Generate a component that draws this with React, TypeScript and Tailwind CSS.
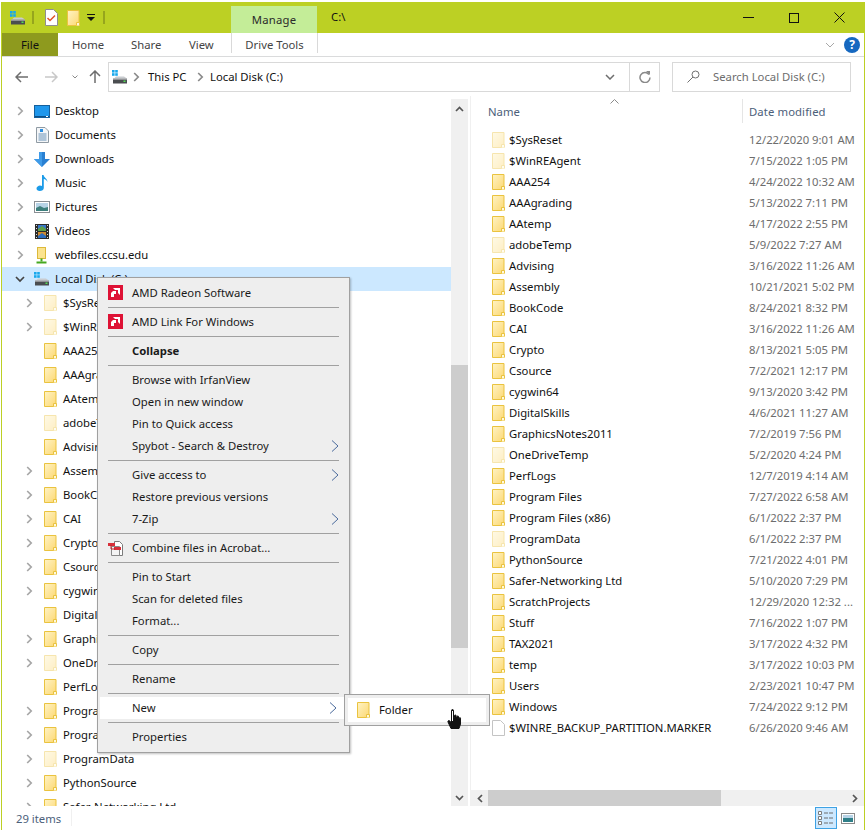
import React from "react";

const Folder = ({ faded = false, className = "" }: { faded?: boolean; className?: string }) => (
  <svg width="13" height="16" viewBox="0 0 13 16" className={`shrink-0 ${className}`} style={{ opacity: faded ? 0.42 : 1 }}>
    <defs>
      <linearGradient id="fg" x1="0" y1="0" x2="1" y2="1">
        <stop offset="0" stopColor="#fff3c4" />
        <stop offset="1" stopColor="#fcd873" />
      </linearGradient>
    </defs>
    <path d="M.5.5h11.5v15H.5z" fill="url(#fg)" stroke="#eac33f" />
    <path d="M9.5 15.5v-3h3v3" fill="#fff8dc" stroke="#eac33f" />
  </svg>
);

const Drive = ({ className = "" }: { className?: string }) => (
  <svg width="16" height="14" viewBox="0 0 16 14" className={`shrink-0 ${className}`}>
    <rect x="0" y="0" width="2.6" height="2.6" fill="#18a8ec" />
    <rect x="3.2" y="0" width="2.6" height="2.6" fill="#18a8ec" />
    <rect x="0" y="3.2" width="2.6" height="2.6" fill="#18a8ec" />
    <rect x="3.2" y="3.2" width="2.6" height="2.6" fill="#18a8ec" />
    <path d="M2 8.5 4 6.5h8l3 2z" fill="#c9ccd0" />
    <rect x="1" y="8.5" width="14" height="5" fill="#4a4d50" />
    <rect x="1" y="8.5" width="14" height="1" fill="#d8dadc" />
    <rect x="11.5" y="10.5" width="2" height="1.5" fill="#52e052" />
  </svg>
);

const Chev = ({ className = "", color = "#a6a6a6" }: { className?: string; color?: string }) => (
  <svg width="7" height="10" viewBox="0 0 7 10" className={`shrink-0 ${className}`}>
    <path d="M1.2 1 5.2 5 1.2 9" fill="none" stroke={color} strokeWidth="1.7" />
  </svg>
);

const Desktop = () => (
  <svg width="16" height="13" viewBox="0 0 16 13" className="shrink-0">
    <rect x=".5" y=".5" width="15" height="12" fill="#1f97ec" stroke="#15609c" />
    <rect x="1" y="11" width="14" height="1" fill="#0c4f86" />
    <rect x="12" y="11" width="2" height="1" fill="#fff" />
  </svg>
);
const Documents = () => (
  <svg width="13" height="16" viewBox="0 0 13 16" className="shrink-0">
    <path d="M.5.5h8.5l3.5 3.5v11.5H.5z" fill="#f4f6f8" stroke="#8f9aa3" />
    <path d="M4 2h3v3H4z" fill="#2d8fe0" />
    <path d="M2.5 7h8M2.5 9h8M2.5 11h8M2.5 13h8" stroke="#6a93b8" />
  </svg>
);
const Downloads = () => (
  <svg width="16" height="15" viewBox="0 0 16 15" className="shrink-0">
    <path d="M5 0h6v7h5l-8 8-8-8h5z" fill="#2a80d2" />
    <path d="M5 0h3v15l-8-8h5z" fill="#3f9be8" />
  </svg>
);
const Music = () => (
  <svg width="13" height="16" viewBox="0 0 13 16" className="shrink-0">
    <path d="M6 0h1.6c.3 2.600 4 3.500 3.800 7-.6-1.600-2-2.600-3.600-2.900V13c0 2-2 3-4 3S.5 15 .5 13.500 2.500 10.600 4 10.600c.8 0 1.500.2 2 .5z" fill="#1c9be8" />
  </svg>
);
const Pictures = () => (
  <svg width="16" height="12" viewBox="0 0 16 12" className="shrink-0">
    <rect x=".5" y=".5" width="15" height="11" fill="#fff" stroke="#8a8f94" />
    <rect x="2" y="2" width="12" height="8" fill="#b7d3e6" />
    <path d="M2 7 6 5l4 2 4-1v4H2z" fill="#3d7f7c" />
  </svg>
);
const Videos = () => (
  <svg width="14" height="15" viewBox="0 0 14 15" className="shrink-0">
    <rect width="14" height="15" fill="#2c2c2c" />
    <rect x="3" y="1" width="8" height="6" fill="#3a78c8" />
    <rect x="3" y="8" width="8" height="6" fill="#d08a30" />
    <path d="M3 5l4-3 4 3v2H3z" fill="#5ea04a" />
    <path d="M3 12l4-3 4 3v2H3z" fill="#2f6fc0" />
    <path d="M1 1h1v1H1zM1 4h1v1H1zM1 7h1v1H1zM1 10h1v1H1zM1 13h1v1H1zM12 1h1v1h-1zM12 4h1v1h-1zM12 7h1v1h-1zM12 10h1v1h-1zM12 13h1v1h-1z" fill="#ddd" />
  </svg>
);
const NetFolder = () => (
  <svg width="16" height="17" viewBox="0 0 16 17" className="shrink-0">
    <rect x="3.500" y=".5" width="8" height="11" fill="#fbe38e" stroke="#dcb93a" />
    <path d="M7.500 11.500v3" stroke="#45a820" strokeWidth="2" />
    <path d="M2.500 15.500h10" stroke="#45a820" strokeWidth="2" />
  </svg>
);
const Amd = () => (
  <span className="w-[15px] h-[15px] bg-[#de1235] flex items-center justify-center shrink-0">
    <svg width="9" height="9" viewBox="0 0 9 9">
      <path d="M2 0h7v7L7 5V2H4z" fill="#fff" />
      <path d="M0 5l2-2h3v3H3v3H0z" fill="#fff" />
    </svg>
  </span>
);
const Acrobat = () => (
  <svg width="18" height="17" viewBox="0 0 18 17" className="shrink-0">
    <path d="M6.500 1.500h5l3 3v11h-8z" fill="#fff" stroke="#7c7c7c" />
    <path d="M3.500 6.500h8v9h-8z" fill="#f4f4f4" stroke="#8a8a8a" />
    <rect x="0" y="3" width="7" height="3" fill="#d8303a" />
    <rect x="6" y="7" width="7" height="3" fill="#d8303a" />
    <path d="M3 5v4h4" stroke="#c02028" fill="none" />
  </svg>
);

type TreeRow = { n: string; c?: boolean; f?: boolean };
const kids: TreeRow[] = [
  { n: "$SysReset", c: true, f: true },
  { n: "$WinREAgent", c: true, f: true },
  { n: "AAA254" },
  { n: "AAAgrading" },
  { n: "AAtemp" },
  { n: "adobeTemp", f: true },
  { n: "Advising" },
  { n: "Assembly", c: true },
  { n: "BookCode", c: true },
  { n: "CAI", c: true },
  { n: "Crypto", c: true },
  { n: "Csource", c: true },
  { n: "cygwin64", c: true },
  { n: "DigitalSkills" },
  { n: "GraphicsNotes2011", c: true },
  { n: "OneDriveTemp", c: true, f: true },
  { n: "PerfLogs" },
  { n: "Program Files", c: true },
  { n: "Program Files (x86)", c: true },
  { n: "ProgramData", c: true, f: true },
  { n: "PythonSource", c: true },
  { n: "Safer-Networking Ltd", c: true },
];

const top: [string, React.ReactNode][] = [
  ["Desktop", <Desktop />],
  ["Documents", <Documents />],
  ["Downloads", <Downloads />],
  ["Music", <Music />],
  ["Pictures", <Pictures />],
  ["Videos", <Videos />],
  ["webfiles.ccsu.edu", <NetFolder />],
];

const files: [string, string, boolean?][] = [
  ["$SysReset", "12/22/2020 9:01 AM", true],
  ["$WinREAgent", "7/15/2022 1:05 PM", true],
  ["AAA254", "4/24/2022 10:32 AM"],
  ["AAAgrading", "5/13/2022 7:11 PM"],
  ["AAtemp", "4/17/2022 2:55 PM"],
  ["adobeTemp", "5/9/2022 7:27 AM", true],
  ["Advising", "3/16/2022 11:26 AM"],
  ["Assembly", "10/21/2021 5:02 PM"],
  ["BookCode", "8/24/2021 8:32 PM"],
  ["CAI", "3/16/2022 11:26 AM"],
  ["Crypto", "8/13/2021 5:05 PM"],
  ["Csource", "7/2/2021 12:17 PM"],
  ["cygwin64", "9/13/2020 3:42 PM"],
  ["DigitalSkills", "4/6/2021 11:27 AM"],
  ["GraphicsNotes2011", "7/2/2019 7:56 PM"],
  ["OneDriveTemp", "5/2/2020 4:24 PM", true],
  ["PerfLogs", "12/7/2019 4:14 AM"],
  ["Program Files", "7/27/2022 6:58 AM"],
  ["Program Files (x86)", "6/1/2022 2:37 PM"],
  ["ProgramData", "6/1/2022 2:37 PM", true],
  ["PythonSource", "7/21/2022 4:01 PM"],
  ["Safer-Networking Ltd", "5/10/2020 7:29 PM"],
  ["ScratchProjects", "12/29/2020 12:32 ..."],
  ["Stuff", "7/16/2022 1:07 PM"],
  ["TAX2021", "3/17/2022 4:32 PM"],
  ["temp", "3/17/2022 10:03 PM"],
  ["Users", "2/23/2021 10:47 PM"],
  ["Windows", "7/24/2022 9:12 PM"],
];

const Sep = () => <div className="h-px bg-[#a0a0a0] mx-[10px] my-[3px]" />;
const MenuArrow = () => (
  <svg width="8" height="12" viewBox="0 0 8 12" className="absolute right-[10px] top-[5px]">
    <path d="M1 .5 7 6l-6 5.500" fill="none" stroke="#4a6a9c" />
  </svg>
);
const Item = ({ t, icon, bold, arrow, hi }: { t: string; icon?: React.ReactNode; bold?: boolean; arrow?: boolean; hi?: boolean }) => (
  <div className={`relative h-[22px] flex items-center text-[#1a1a1a] ${bold ? "font-bold" : ""} ${hi ? "bg-white mx-[2px] pl-[32px]" : "pl-[34px]"}`}>
    {icon && <span className="absolute left-[10px] top-[3px]">{icon}</span>}
    {t}
    {arrow && <MenuArrow />}
  </div>
);

export default function App() {
  return (
    <div className="w-[866px] h-[830px] bg-white relative overflow-hidden text-[11.3px] text-[#111] font-['Noto_Sans',sans-serif] leading-none pt-[2px] pl-[1px]">
      <div className="w-[864px] h-[828px] border-x border-[#bcd024] flex flex-col">
        {/* title bar */}
        <div className="h-[31px] bg-[#bcd024] flex items-stretch shrink-0 relative">
          <div className="flex items-center pl-[8px]">
            <Drive />
            <span className="w-[2px] h-[13px] bg-[#e2e79b] border-x border-[#96a51d] ml-[6px]" />
            <svg width="13" height="17" viewBox="0 0 13 17" className="ml-[11px]">
              <path d="M.5.5h8l4 4v12H.5z" fill="#fff" stroke="#8f8f8f" />
              <path d="M2.500 9l2.500 2.500L10 6.500" fill="none" stroke="#e0532a" strokeWidth="1.500" />
            </svg>
            <span className="ml-[9px]"><Folder /></span>
            <svg width="10" height="8" viewBox="0 0 10 8" className="ml-[6px]">
              <path d="M1 .5h8" stroke="#111" />
              <path d="M1 3h8L5 7z" fill="#111" />
            </svg>
            <span className="w-[2px] h-[13px] bg-[#e2e79b] border-x border-[#96a51d] ml-[7px]" />
          </div>
          <div className="ml-[126px] mt-[4px] w-[86px] bg-[#c4ed98] flex items-center justify-center tracking-[0.2px] text-[#2b2b2b]">
            Manage
          </div>
          <div className="ml-[14px] flex items-center pb-[1px]">C:\</div>
          <div className="ml-auto flex items-center">
            <svg width="11" height="11" viewBox="0 0 11 11" className="mr-[35px]"><path d="M0 5.500h11" stroke="#111" /></svg>
            <svg width="10" height="10" viewBox="0 0 10 10" className="mr-[35px]"><rect x=".5" y=".5" width="9" height="9" fill="none" stroke="#111" /></svg>
            <svg width="11" height="11" viewBox="0 0 11 11" className="mr-[19px]"><path d="M.5.5l10 10M10.500.5l-10 10" stroke="#111" /></svg>
          </div>
        </div>

        {/* ribbon tabs */}
        <div className="h-[24px] flex items-stretch border-b border-[#dadbdc] shrink-0 relative text-[#444]">
          <div className="w-[56px] bg-[#8e9a1e] text-[#111] flex items-center justify-center pt-[1px]">File</div>
          <div className="ml-[14px] w-[59px] flex items-center pt-[1px]">Home</div>
          <div className="w-[58px] flex items-center pt-[1px]">Share</div>
          <div className="w-[42px] flex items-center pt-[1px]">View</div>
          <div className="w-[87px] border-x border-[#d9d9d9] mb-[3px] flex items-center justify-center pt-[3px]">Drive Tools</div>
          <svg width="10" height="6" viewBox="0 0 10 6" className="absolute right-[29px] top-[9px]"><path d="M1 1l4 4 4-4" fill="none" stroke="#a8a8a8" /></svg>
          <span className="absolute right-[4px] top-[4px] w-[16px] h-[16px] rounded-full bg-[#1668c0] text-white font-bold text-[12px] flex items-center justify-center">?</span>
        </div>

        {/* address row */}
        <div className="h-[39px] flex items-center shrink-0 relative">
          <svg width="13" height="12" viewBox="0 0 13 12" className="ml-[13px]"><path d="M6 1 1 6l5 5M1 6h12" fill="none" stroke="#6e6e6e" strokeWidth="1.500" /></svg>
          <svg width="13" height="12" viewBox="0 0 13 12" className="ml-[17px]"><path d="M7 1l5 5-5 5M12 6H0" fill="none" stroke="#c8c8c8" strokeWidth="1.500" /></svg>
          <svg width="6" height="4" viewBox="0 0 6 4" className="ml-[14px]"><path d="M.5.5 3 3 5.500.5" fill="none" stroke="#8a8a8a" /></svg>
          <svg width="12" height="13" viewBox="0 0 12 13" className="ml-[11px]"><path d="M1 6l5-5 5 5M6 1v12" fill="none" stroke="#6e6e6e" strokeWidth="1.500" /></svg>
          <div className="ml-[7px] w-[552px] h-[30px] border border-[#d9d9d9] flex items-center">
            <Drive className="ml-[3px]" />
            <Chev className="ml-[5px]" color="#8a8a8a" />
            <span className="ml-[8px] w-[43px]">This PC</span>
            <Chev className="ml-[6px]" color="#8a8a8a" />
            <span className="ml-[6px]">Local Disk (C:)</span>
            <svg width="10" height="6" viewBox="0 0 10 6" className="ml-auto mr-[14px]"><path d="M1 1l4 4 4-4" fill="none" stroke="#6e6e6e" strokeWidth="1.500" /></svg>
            <div className="w-[30px] h-full border-l border-[#d9d9d9] flex items-center justify-center">
              <svg width="12" height="12" viewBox="0 0 12 12"><path d="M10 3.500A5 5 0 1 0 11 6.500" fill="none" stroke="#8a8a8a" strokeWidth="1.500" /><path d="M7 0h4v4z" fill="#8a8a8a" /></svg>
            </div>
          </div>
          <div className="ml-[12px] w-[179px] h-[30px] border border-[#d9d9d9] flex items-center text-[#6d6d6d]">
            <svg width="13" height="13" viewBox="0 0 13 13" className="ml-[14px]"><circle cx="8.500" cy="4.500" r="3.500" fill="none" stroke="#707070" /><path d="M6 7 .5 12.500" stroke="#707070" /></svg>
            <span className="ml-[13px]">Search Local Disk (C:)</span>
          </div>
        </div>

        {/* main */}
        <div className="flex-1 min-h-0 flex relative">
          {/* tree */}
          <div className="w-[449px] shrink-0 overflow-hidden pt-[3px]">
            {top.map(([n, ic]) => (
              <div key={n} className="h-[24px] flex items-center">
                <Chev className="ml-[15px]" />
                <span className="w-[16px] ml-[10px] flex justify-center">{ic}</span>
                <span className="ml-[5px]">{n}</span>
              </div>
            ))}
            <div className="h-[24px] flex items-center bg-[#cce8ff]">
              <svg width="10" height="7" viewBox="0 0 10 7" className="ml-[13px]"><path d="M1 1l4 4 4-4" fill="none" stroke="#444" strokeWidth="1.700" /></svg>
              <Drive className="ml-[9px]" />
              <span className="ml-[5px]">Local Disk (C:)</span>
            </div>
            {kids.map((k) => (
              <div key={k.n} className="h-[24px] flex items-center">
                <span className="w-[33px] shrink-0 flex justify-end">{k.c && <Chev className="mr-[2px]" />}</span>
                <Folder faded={k.f} className="ml-[9px]" />
                <span className="ml-[6px] whitespace-nowrap">{k.n}</span>
              </div>
            ))}
          </div>

          {/* tree scrollbar */}
          <div className="w-[17px] shrink-0 bg-[#f0f0f0] flex flex-col items-center mt-[3px] relative">
            <div className="h-[17px] flex items-center justify-center pt-[2px]">
              <svg width="9" height="6" viewBox="0 0 9 6"><path d="M1 5l3.500-3.500L8 5" fill="none" stroke="#555" strokeWidth="1.700" /></svg>
            </div>
            <div className="w-full h-[283px] bg-[#cdcdcd] mt-[249px]" />
            <div className="mt-auto h-[17px] flex items-center justify-center">
              <svg width="9" height="6" viewBox="0 0 9 6"><path d="M1 1l3.500 3.500L8 1" fill="none" stroke="#555" strokeWidth="1.700" /></svg>
            </div>
          </div>

          {/* list */}
          <div className="flex-1 min-w-0 flex flex-col ml-[2px] border-l border-[#f0f0f0] relative">
            <div className="h-[33px] shrink-0 flex items-start relative text-[#4c607a] pl-[17px] pt-[10px]">
              <span>Name</span>
              <svg width="9" height="5" viewBox="0 0 9 5" className="absolute left-[139px] top-[3px]"><path d="M.5 4.500 4.500.5l4 4" fill="none" stroke="#8a8a8a" /></svg>
              <span className="absolute left-[271px] top-[3px] h-[24px] w-px bg-[#e5e5e5]" />
              <span className="absolute left-[278px] top-[10px] tracking-[0.1px]">Date modified</span>
            </div>
            <div className="flex-1 min-h-0 overflow-hidden">
              {files.map(([n, d, f]) => (
                <div key={n} className="h-[21px] flex items-center">
                  <Folder faded={f} className="ml-[21px]" />
                  <span className="w-[240px] ml-[4px] whitespace-nowrap shrink-0">{n}</span>
                  <span className="text-[#6d6d6d] whitespace-nowrap">{d}</span>
                </div>
              ))}
              <div className="h-[21px] flex items-center">
                <svg width="13" height="16" viewBox="0 0 13 16" className="ml-[21px] shrink-0"><path d="M.5.5h8l4 4v11H.5z" fill="#fff" stroke="#c4c4c4" /></svg>
                <span className="w-[240px] ml-[4px] whitespace-nowrap shrink-0">$WINRE_BACKUP_PARTITION.MARKER</span>
                <span className="text-[#6d6d6d] whitespace-nowrap">6/26/2020 9:46 AM</span>
              </div>
            </div>
            <div className="h-[16px] shrink-0 bg-[#f0f0f0] flex items-center">
              <svg width="6" height="9" viewBox="0 0 6 9" className="ml-[6px]"><path d="M5 1 1.500 4.500 5 8" fill="none" stroke="#555" strokeWidth="1.700" /></svg>
              <div className="ml-[5px] w-[233px] h-full bg-[#cdcdcd]" />
              <svg width="6" height="9" viewBox="0 0 6 9" className="ml-auto mr-[6px]"><path d="M1 1l3.500 3.500L1 8" fill="none" stroke="#555" strokeWidth="1.700" /></svg>
            </div>
          </div>

          {/* context menu */}
          <div className="absolute left-[95px] top-[181px] w-[253px] bg-[#eeeeee] border border-[#a0a0a0] py-[4px] shadow-[1px_1px_2px_rgba(0,0,0,0.25)]">
            <Item t="AMD Radeon Software" icon={<Amd />} />
            <Sep />
            <Item t="AMD Link For Windows" icon={<Amd />} />
            <Sep />
            <Item t="Collapse" bold />
            <Sep />
            <Item t="Browse with IrfanView" />
            <Item t="Open in new window" />
            <Item t="Pin to Quick access" />
            <Item t="Spybot - Search & Destroy" arrow />
            <Sep />
            <Item t="Give access to" arrow />
            <Item t="Restore previous versions" />
            <Item t="7-Zip" arrow />
            <Sep />
            <Item t="Combine files in Acrobat..." icon={<Acrobat />} />
            <Sep />
            <Item t="Pin to Start" />
            <Item t="Scan for deleted files" />
            <Item t="Format..." />
            <Sep />
            <Item t="Copy" />
            <Sep />
            <Item t="Rename" />
            <Sep />
            <Item t="New" arrow hi />
            <Sep />
            <Item t="Properties" />
          </div>

          {/* submenu */}
          <div className="absolute left-[342px] top-[598px] w-[146px] h-[32px] bg-[#eeeeee] border border-[#a0a0a0] p-[3px]">
            <div className="h-full bg-white flex items-center pl-[9px]">
              <Folder />
              <span className="ml-[9px]">Folder</span>
            </div>
          </div>

          {/* hand cursor */}
          <svg width="15" height="21" viewBox="0 0 15 21" className="absolute left-[445px] top-[613px]">
            <path d="M4.500 1.500c0-1.300 2-1.300 2 0V8l1 .2V6.500c0-.8 1.500-.8 1.500 0v2l1 .2V7.500c0-.8 1.500-.8 1.500 0v1.500l.8.2c0-.8 1.200-.8 1.200 0V15l-1.500 4.500h-8L1 13c-.5-1 .8-2 1.800-1l1.700 2z" fill="#111" stroke="#111" />
            <path d="M5.500 2v10" stroke="#fff" strokeWidth="1" />
          </svg>
        </div>

        {/* status bar */}
        <div className="h-[24px] shrink-0 bg-white flex items-center relative text-[#4c607a]">
          <span className="ml-[14px] pt-[1px]">29 items</span>
          <span className="absolute left-[69px] top-[3px] h-[17px] w-px bg-[#f0f0f0]" />
          <div className="ml-auto flex items-center mr-[9px] gap-[4px]">
            <div className="w-[22px] h-[22px] bg-[#cce8ff] border border-[#3ea2e4] flex items-center justify-center">
              <svg width="16" height="14" viewBox="0 0 16 14"><path d="M.5.5h3v3h-3zM.5 5.500h3v3h-3zM.5 10.500h3v3h-3z" fill="#fff" stroke="#7d7d7d" /><path d="M6 2h4M11 2h4M6 7h4M11 7h4M6 12h4M11 12h4" stroke="#6d6d6d" /></svg>
            </div>
            <svg width="14" height="11" viewBox="0 0 14 11"><rect x=".5" y=".5" width="13" height="10" fill="#fff" stroke="#8a8a8a" /><rect x="2" y="2" width="10" height="3" fill="#b7d3e6" /><rect x="2" y="5" width="10" height="4" fill="#2f7f88" /></svg>
          </div>
        </div>
      </div>
    </div>
  );
}
